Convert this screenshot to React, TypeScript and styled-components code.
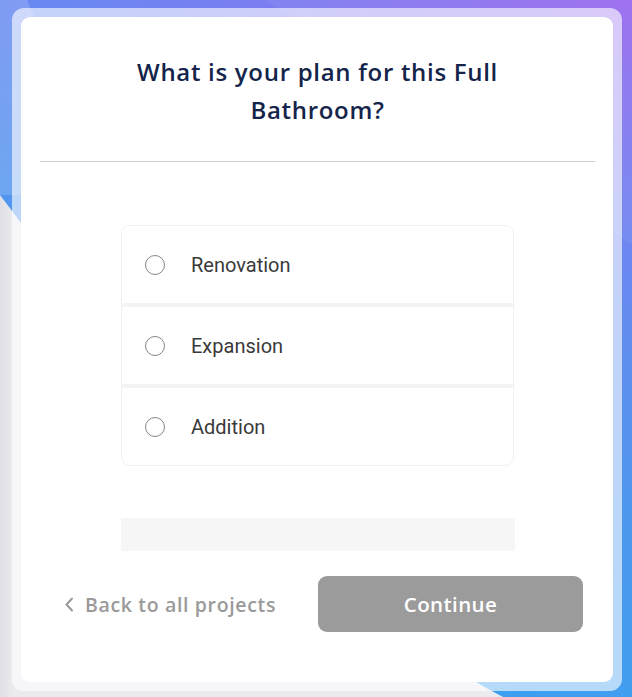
import React from "react";
import styled, { createGlobalStyle } from "styled-components";

const GlobalStyle = createGlobalStyle`
  html, body {
    margin: 0;
    padding: 0;
    height: 697px;
    overflow: hidden;
    background: linear-gradient(90deg, #dfdfe5 0px, #ebebef 14px, #ebebef 100%);
  }
  * { box-sizing: border-box; }
`;

const Stage = styled.div`
  position: relative;
  width: 632px;
  height: 697px;
  padding: 8px 10px 6px 12px;
  isolation: isolate;
`;

const Backdrop = styled.svg`
  position: absolute;
  inset: 0;
  z-index: -1;
`;

const Frame = styled.div`
  height: 100%;
  padding: 9px;
  border-radius: 12px;
  background: rgba(255, 255, 255, 0.62);
`;

const Card = styled.section`
  height: 100%;
  background: #ffffff;
  border-radius: 9px;
  padding: 36px 18px 0 19px;
  display: flex;
  flex-direction: column;
  align-items: center;
`;

const Title = styled.h1`
  margin: 0;
  max-width: 420px;
  text-align: center;
  font-family: "Open Sans", "Liberation Sans", sans-serif;
  font-weight: 600;
  font-size: 24px;
  letter-spacing: 0.7px;
  line-height: 38px;
  color: #14244a;
`;

const Rule = styled.hr`
  align-self: stretch;
  margin: 32px 0 0;
  border: 0;
  height: 1px;
  background: #cfcfcf;
`;

const Options = styled.div`
  margin-top: 63px;
  width: 393px;
  border: 1px solid #f1f1f1;
  border-radius: 9px;
  overflow: hidden;
  display: flex;
  flex-direction: column;
  gap: 4px;
  background: #f4f4f4;
`;

const Option = styled.label`
  height: 77px;
  background: #ffffff;
  display: flex;
  align-items: center;
  gap: 26px;
  padding-left: 23px;
  cursor: pointer;
  font-family: Roboto, "Liberation Sans", sans-serif;
  font-size: 20px;
  color: #3a3a3a;
`;

const Radio = styled.span`
  width: 20px;
  height: 20px;
  border-radius: 50%;
  border: 1px solid #858585;
  background: #fff;
  flex: none;
`;

const Placeholder = styled.div`
  margin-top: 52px;
  width: 394px;
  height: 33px;
  background: #f6f6f6;
`;

const Footer = styled.div`
  align-self: stretch;
  margin: 25px 12px 0 24px;
  display: flex;
  align-items: center;
  justify-content: space-between;
`;

const BackLink = styled.a`
  display: flex;
  align-items: center;
  gap: 11px;
  font-family: "Open Sans", "Liberation Sans", sans-serif;
  font-weight: 600;
  font-size: 19.5px;
  letter-spacing: 0.65px;
  color: #9a9a9a;
  text-decoration: none;
  cursor: pointer;
`;

const ContinueButton = styled.button`
  width: 265px;
  height: 56px;
  border: 0;
  border-radius: 9px;
  background: #9b9b9b;
  color: #ffffff;
  font-family: "Open Sans", "Liberation Sans", sans-serif;
  font-weight: 600;
  font-size: 20.5px;
  letter-spacing: 0.4px;
  cursor: default;
`;

const options = ["Renovation", "Expansion", "Addition"];

export default function App() {
  return (
    <>
      <GlobalStyle />
      <Stage>
        <Backdrop width="632" height="697" viewBox="0 0 632 697">
          <defs>
            <linearGradient id="blob" gradientUnits="userSpaceOnUse" x1="200" y1="760" x2="560" y2="-40">
              <stop offset="0" stopColor="#2fa6f2" />
              <stop offset="0.45" stopColor="#4d98ee" />
              <stop offset="0.72" stopColor="#6a88f1" />
              <stop offset="1" stopColor="#9b68f0" />
            </linearGradient>
          </defs>
          <path d="M0 0 H632 V697 H503 C303 591 150 395 0 195 Z" fill="url(#blob)" />
          <path d="M0 0 H27 L110 195 L0 195 Z" fill="#ffffff" opacity="0.16" />
          <path d="M265 0 H632 V245 Z" fill="#ffffff" opacity="0.06" />
        </Backdrop>
        <Frame>
          <Card>
            <Title>What is your plan for this Full Bathroom?</Title>
            <Rule />
            <Options>
              {options.map((o) => (
                <Option key={o}>
                  <Radio />
                  {o}
                </Option>
              ))}
            </Options>
            <Placeholder />
            <Footer>
              <BackLink>
                <svg width="10" height="15" viewBox="0 0 10 15">
                  <path d="M8 1.5 L2.5 7.5 L8 13.5" fill="none" stroke="#9a9a9a" strokeWidth="2" strokeLinecap="round" strokeLinejoin="round" />
                </svg>
                Back to all projects
              </BackLink>
              <ContinueButton>Continue</ContinueButton>
            </Footer>
          </Card>
        </Frame>
      </Stage>
    </>
  );
}
